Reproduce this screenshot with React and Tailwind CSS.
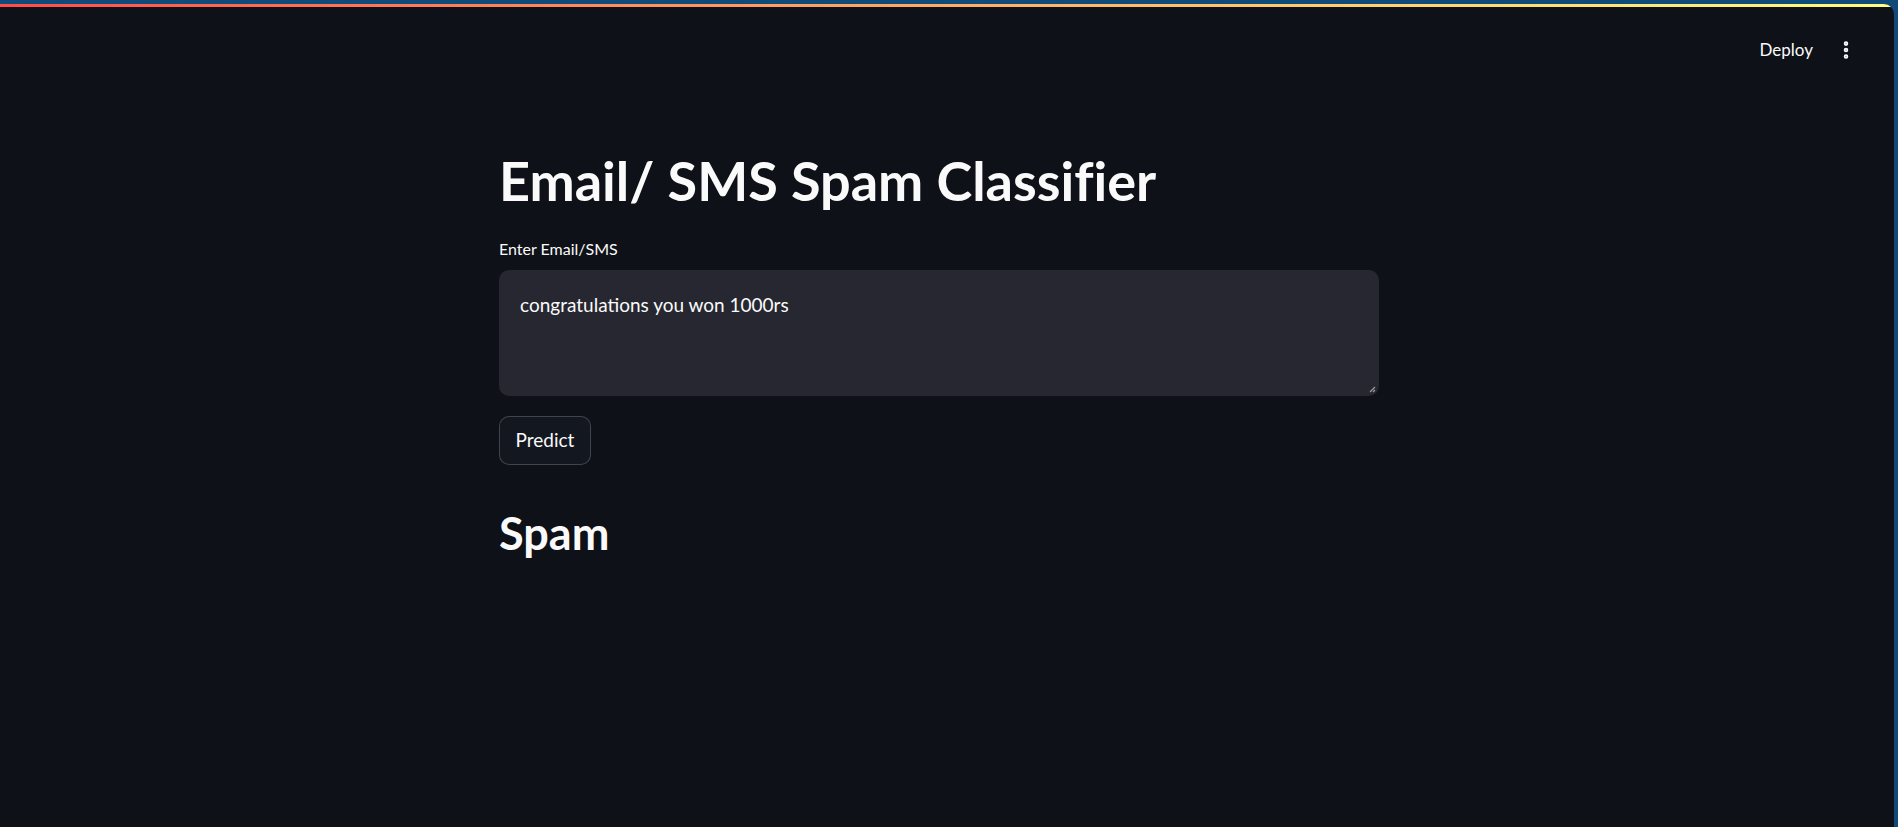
import { EllipsisVertical } from 'lucide-react';

export default function App() {
  return (
    <div className="min-h-screen bg-[#0f4a78] pt-[4px] pr-[4px] font-['Lato',sans-serif]">
      <div className="min-h-[823px] bg-[#0e1117] rounded-tr-[10px] overflow-hidden text-[#fafafa]">
        {/* Decoration bar */}
        <div className="h-[3px] bg-gradient-to-r from-[#ff4b4b] to-[#fffd80]" />

        {/* Header */}
        <header className="flex items-center justify-end h-[92px] -mt-[3px] pr-[37px] gap-[22px]">
          <span className="text-[17px]">Deploy</span>
          <EllipsisVertical size={22} strokeWidth={3} />
        </header>

        {/* Main block */}
        <main className="ml-[499px] w-[880px] pt-[53px]">
          <h1 className="text-[54px] font-bold leading-[1.2] [font-variant-ligatures:none]">
            Email/ SMS Spam Classifier
          </h1>

          <label className="block mt-[27px] text-[16px] leading-none">Enter Email/SMS</label>
          <div className="mt-[13px] h-[126px] rounded-[10px] bg-[#262730] px-[21px] pt-[21px] relative">
            <p className="text-[19px]">congratulations you won 1000rs</p>
            <svg className="absolute right-[3px] bottom-[3px]" width="7" height="7" viewBox="0 0 7 7">
              <path d="M6 1 L1 6 M6 4 L4 6" stroke="#9a9aa0" strokeWidth="1.2" />
            </svg>
          </div>

          <button className="mt-[20px] h-[49px] w-[92px] rounded-[10px] border border-[#fafafa]/20 bg-[#13171f] text-[19px]">
            Predict
          </button>

          <h2 className="mt-[41px] text-[45px] font-bold leading-[1.2]">Spam</h2>
        </main>
      </div>
    </div>
  );
}
